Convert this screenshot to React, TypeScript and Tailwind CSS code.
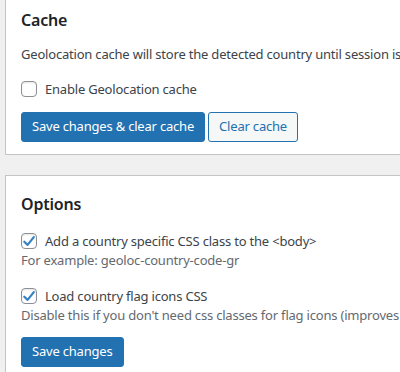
import React from 'react';

const font = { fontFamily: '"Noto Sans", "Open Sans", sans-serif' };

const Check = ({ checked, label }: { checked?: boolean; label: string }) => (
    <label className="flex items-center gap-2 text-[13px] leading-5 tracking-[-0.2px] text-[#3c434a] whitespace-nowrap">
        <span className="relative w-4 h-4 flex-shrink-0 rounded-[4px] border border-[#8c8f94] bg-white shadow-[inset_0_1px_2px_rgba(0,0,0,0.1)]">
            {checked && (
                <svg viewBox="0 0 20 20" className="absolute -left-[3px] -top-[3px] w-5 h-5">
                    <path d="M14.8 6.1 8.6 13.9 5.3 10.7" fill="none" stroke="#3582c4" strokeWidth="2.2" strokeLinecap="round" strokeLinejoin="round" />
                </svg>
            )}
        </span>
        {label}
    </label>
);

export default function App() {
    return (
        <div className="w-[400px] h-[372px] overflow-hidden bg-[#f0f0f1] pl-[5px]" style={font}>
            <div className="w-[520px] bg-white border border-t-0 border-[#c3c4c7] pl-[15px] pt-[8px] pb-[12px]">
                <h2 className="text-[16px] leading-6 font-semibold tracking-[-0.2px] text-[#1d2327]">Cache</h2>
                <p className="mt-[12px] text-[13px] leading-5 tracking-[-0.2px] text-[#3c434a] whitespace-nowrap">
                    Geolocation cache will store the detected country until session is closed.
                </p>
                <div className="mt-[15px]">
                    <Check label="Enable Geolocation cache" />
                </div>
                <div className="mt-[13px] flex gap-[3px] tracking-[-0.2px]">
                    <button className="h-[30px] px-[10px] rounded-[3px] bg-[#2271b1] border border-[#2271b1] text-white text-[13px]">
                        Save changes &amp; clear cache
                    </button>
                    <button className="h-[30px] px-[10px] rounded-[3px] bg-[#f6f7f7] border border-[#2271b1] text-[#2271b1] text-[13px]">
                        Clear cache
                    </button>
                </div>
            </div>
            <div className="mt-[20px] w-[520px] bg-white border border-[#c3c4c7] pl-[15px] pt-[16px] pb-[12px]">
                <h2 className="text-[16px] leading-6 font-semibold tracking-[-0.2px] text-[#1d2327]">Options</h2>
                <div className="mt-[15px]">
                    <Check checked label="Add a country specific CSS class to the <body>" />
                    <p className="text-[13px] leading-5 tracking-[-0.2px] text-[#646970] -mt-[1px]">For example: geoloc-country-code-gr</p>
                </div>
                <div className="mt-[16px]">
                    <Check checked label="Load country flag icons CSS" />
                    <p className="text-[13px] leading-5 tracking-[-0.2px] text-[#646970] -mt-[1px] whitespace-nowrap">
                        Disable this if you don't need css classes for flag icons (improves performance).
                    </p>
                </div>
                <div className="mt-[12px] tracking-[-0.2px]">
                    <button className="h-[30px] px-[10px] rounded-[3px] bg-[#2271b1] border border-[#2271b1] text-white text-[13px]">
                        Save changes
                    </button>
                </div>
            </div>
        </div>
    );
}
